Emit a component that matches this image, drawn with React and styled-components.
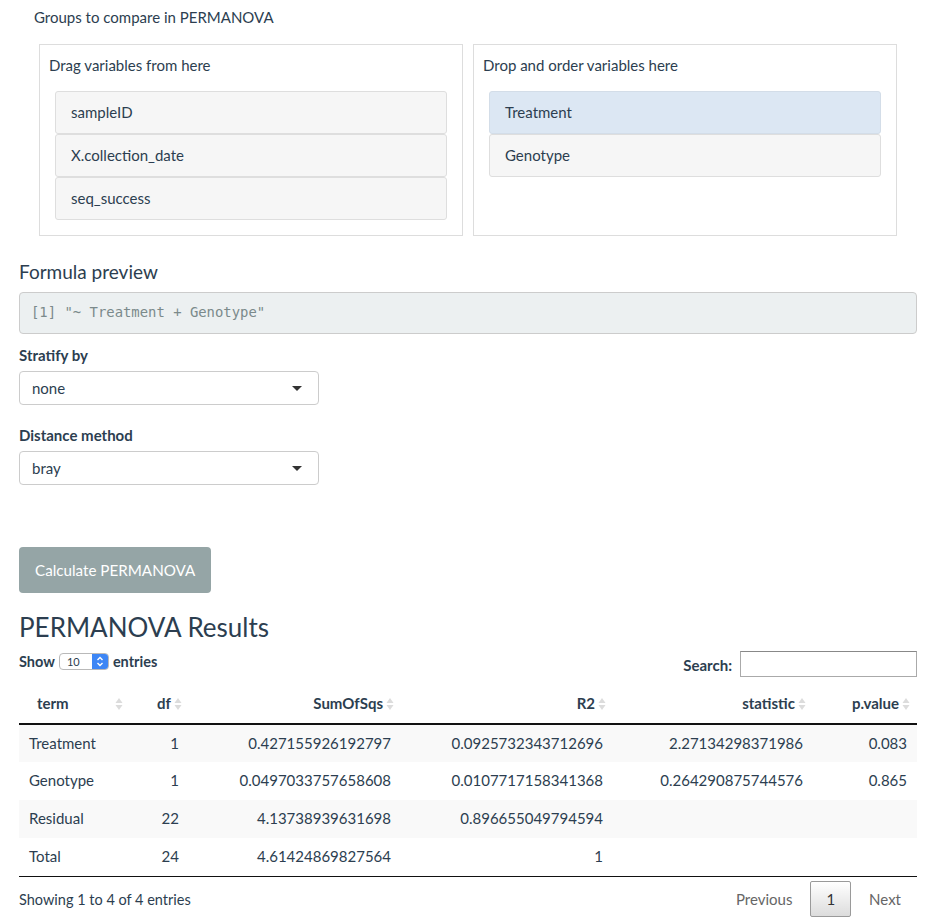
import React from "react";
import styled, { createGlobalStyle } from "styled-components";

const Global = createGlobalStyle`
  html, body { margin: 0; padding: 0; background: #fff; }
  body {
    font-family: Lato, "Open Sans", "Liberation Sans", sans-serif;
    font-size: 15px;
    line-height: 21px;
    color: #2c3e50;
  }
  * { box-sizing: border-box; }
`;

const Page = styled.div`
  width: 926px;
  padding: 7px 9px 0 19px;
  display: flex;
  flex-direction: column;
`;

const GroupTitle = styled.div`
  margin-left: 15px;
  font-size: 15px;
  line-height: 21px;
`;

const Panels = styled.div`
  display: flex;
  gap: 10px;
  margin: 16px 20px 0 20px;
`;

const Panel = styled.div`
  flex: 1;
  border: 1px solid #dddddd;
  padding: 10px 15px 15px 15px;
  display: flex;
  flex-direction: column;
`;

const PanelTitle = styled.div`
  font-size: 15px;
  line-height: 21px;
  margin-left: -6px;
`;

const ItemList = styled.div`
  margin-top: 15px;
  display: flex;
  flex-direction: column;
`;

const Item = styled.div`
  height: 43px;
  padding: 0 15px;
  display: flex;
  align-items: center;
  background: ${(p) => (p.$active ? "#dce7f3" : "#f6f6f6")};
  border: 1px solid ${(p) => (p.$active ? "#d3dde8" : "#dedede")};
  border-radius: 3px;
  font-size: 15px;
`;

const SectionHeading = styled.h4`
  margin: 25px 0 0 0;
  font-size: 19px;
  line-height: 21px;
  font-weight: 400;
`;

const Pre = styled.pre`
  margin: 9.5px 0 0 0;
  height: 42px;
  padding: 0 11px;
  display: flex;
  align-items: center;
  background: #ecf0f1;
  border: 1px solid #cccccc;
  border-radius: 4px;
  font-family: "DejaVu Sans Mono", "Liberation Mono", monospace;
  font-size: 13.9px;
  color: #7b8a8b;
`;

const FieldLabel = styled.label`
  display: block;
  margin-top: ${(p) => p.$top}px;
  font-weight: 700;
  font-size: 15px;
  line-height: 21px;
`;

const SelectBox = styled.div`
  margin-top: 5.5px;
  width: 300px;
  height: 34px;
  border: 1px solid #cccccc;
  border-radius: 4px;
  padding: 0 16px 0 12px;
  display: flex;
  align-items: center;
  justify-content: space-between;
  font-size: 15px;
  background: #fff;
`;

const Caret = styled.span`
  width: 0;
  height: 0;
  border-left: 5px solid transparent;
  border-right: 5px solid transparent;
  border-top: 5px solid #333;
`;

const PrimaryButton = styled.button`
  margin-top: 62px;
  align-self: flex-start;
  height: 46px;
  padding: 0 16px;
  border: none;
  border-radius: 4px;
  background: #95a5a6;
  color: #fff;
  font-family: Lato, "Liberation Sans", sans-serif;
  font-size: 15.2px;
`;

const ResultsHeading = styled.h3`
  margin: 20px 0 0 0;
  font-size: 26px;
  line-height: 29px;
  font-weight: 400;
`;

const Controls = styled.div`
  margin-top: 8.5px;
  display: flex;
  justify-content: space-between;
  align-items: flex-start;
  height: 26px;
`;

const LengthControl = styled.div`
  display: flex;
  align-items: center;
  gap: 4px;
  font-weight: 700;
  font-size: 14.5px;
  line-height: 21px;
`;

const MiniSelect = styled.div`
  width: 50px;
  height: 17px;
  border: 1px solid #b9b9b9;
  border-radius: 4px;
  display: flex;
  align-items: stretch;
  overflow: hidden;
  background: #fff;
  font-weight: 400;
  font-size: 11px;
  line-height: 15px;
`;

const MiniValue = styled.span`
  flex: 1;
  padding-left: 7px;
`;

const MiniArrows = styled.span`
  width: 16px;
  background: #3d86f5;
  display: flex;
  align-items: center;
  justify-content: center;
`;

const SearchControl = styled.label`
  display: flex;
  align-items: center;
  gap: 8px;
  font-weight: 700;
  font-size: 15px;
  padding-top: 3px;
`;

const SearchInput = styled.span`
  display: block;
  width: 177px;
  height: 26px;
  margin-top: -3px;
  border: 1px solid #aaaaaa;
  border-top-color: #888;
  background: #fff;
`;

const Table = styled.table`
  margin-top: 8px;
  width: 898px;
  border-collapse: collapse;
  table-layout: fixed;
  font-size: 15px;
`;

const Th = styled.th`
  position: relative;
  height: 39px;
  padding: 0 18px;
  text-align: ${(p) => (p.$right ? "right" : "left")};
  font-weight: 700;
  font-size: 15px;
  border-bottom: 2px solid #111;
`;

const SortIcon = styled.svg`
  position: absolute;
  right: 6px;
  top: 50%;
  margin-top: -8px;
`;

const Tr = styled.tr`
  background: ${(p) => (p.$odd ? "#f9f9f9" : "#fff")};
  & + & td { border-top: 1px solid #dddddd; }
  &:last-child td { border-bottom: 1px solid #111; height: 39px; }
`;

const Td = styled.td`
  height: 38px;
  padding: 0 10px;
  text-align: ${(p) => (p.$right ? "right" : "left")};
`;

const Footer = styled.div`
  margin-top: 4px;
  display: flex;
  justify-content: space-between;
  align-items: center;
`;

const Info = styled.div`
  font-size: 14.5px;
  padding-top: 1px;
`;

const Pagination = styled.div`
  display: flex;
  gap: 2px;
  margin-right: 0;
`;

const PageButton = styled.span`
  height: 36px;
  padding: 0 15px;
  display: flex;
  align-items: center;
  border: 1px solid ${(p) => (p.$current ? "#9a9a9a" : "transparent")};
  border-radius: 2px;
  background: ${(p) =>
    p.$current ? "linear-gradient(to bottom, #ffffff 0%, #dcdcdc 100%)" : "transparent"};
  color: ${(p) => (p.$current ? "#333" : "#666")};
  font-size: 15px;
`;

const Sort = () => (
  <SortIcon width="10" height="16" viewBox="0 0 10 16">
    <path d="M5 2 L8.5 7 L1.5 7 Z" fill="#dcdcdc" />
    <path d="M5 14 L8.5 9 L1.5 9 Z" fill="#dcdcdc" />
  </SortIcon>
);

const columns = [
  { key: "term", width: 111 },
  { key: "df", width: 59, right: true },
  { key: "SumOfSqs", width: 212, right: true },
  { key: "R2", width: 212, right: true },
  { key: "statistic", width: 200, right: true },
  { key: "p.value", width: 104, right: true },
];

const rows = [
  ["Treatment", "1", "0.427155926192797", "0.0925732343712696", "2.27134298371986", "0.083"],
  ["Genotype", "1", "0.0497033757658608", "0.0107717158341368", "0.264290875744576", "0.865"],
  ["Residual", "22", "4.13738939631698", "0.896655049794594", "", ""],
  ["Total", "24", "4.61424869827564", "1", "", ""],
];

export default function App() {
  return (
    <>
      <Global />
      <Page>
        <GroupTitle>Groups to compare in PERMANOVA</GroupTitle>
        <Panels>
          <Panel>
            <PanelTitle>Drag variables from here</PanelTitle>
            <ItemList>
              <Item>sampleID</Item>
              <Item>X.collection_date</Item>
              <Item>seq_success</Item>
            </ItemList>
          </Panel>
          <Panel>
            <PanelTitle>Drop and order variables here</PanelTitle>
            <ItemList>
              <Item $active>Treatment</Item>
              <Item>Genotype</Item>
            </ItemList>
          </Panel>
        </Panels>

        <SectionHeading>Formula preview</SectionHeading>
        <Pre>[1] "~ Treatment + Genotype"</Pre>

        <FieldLabel $top={11}>Stratify by</FieldLabel>
        <SelectBox>
          <span>none</span>
          <Caret />
        </SelectBox>

        <FieldLabel $top={19.5}>Distance method</FieldLabel>
        <SelectBox>
          <span>bray</span>
          <Caret />
        </SelectBox>

        <PrimaryButton>Calculate PERMANOVA</PrimaryButton>

        <ResultsHeading>PERMANOVA Results</ResultsHeading>

        <Controls>
          <LengthControl>
            Show
            <MiniSelect>
              <MiniValue>10</MiniValue>
              <MiniArrows>
                <svg width="8" height="11" viewBox="0 0 8 11">
                  <path d="M1.5 4 L4 1.5 L6.5 4" stroke="#fff" strokeWidth="1.4" fill="none" />
                  <path d="M1.5 7 L4 9.5 L6.5 7" stroke="#fff" strokeWidth="1.4" fill="none" />
                </svg>
              </MiniArrows>
            </MiniSelect>
            entries
          </LengthControl>
          <SearchControl>
            Search:
            <SearchInput />
          </SearchControl>
        </Controls>

        <Table>
          <colgroup>
            {columns.map((c) => (
              <col key={c.key} style={{ width: c.width }} />
            ))}
          </colgroup>
          <thead>
            <tr>
              {columns.map((c) => (
                <Th key={c.key} $right={c.right}>
                  {c.key}
                  <Sort />
                </Th>
              ))}
            </tr>
          </thead>
          <tbody>
            {rows.map((r, i) => (
              <Tr key={r[0]} $odd={i % 2 === 0}>
                {r.map((v, j) => (
                  <Td key={j} $right={columns[j].right}>
                    {v}
                  </Td>
                ))}
              </Tr>
            ))}
          </tbody>
        </Table>

        <Footer>
          <Info>Showing 1 to 4 of 4 entries</Info>
          <Pagination>
            <PageButton>Previous</PageButton>
            <PageButton $current>1</PageButton>
            <PageButton>Next</PageButton>
          </Pagination>
        </Footer>
      </Page>
    </>
  );
}
